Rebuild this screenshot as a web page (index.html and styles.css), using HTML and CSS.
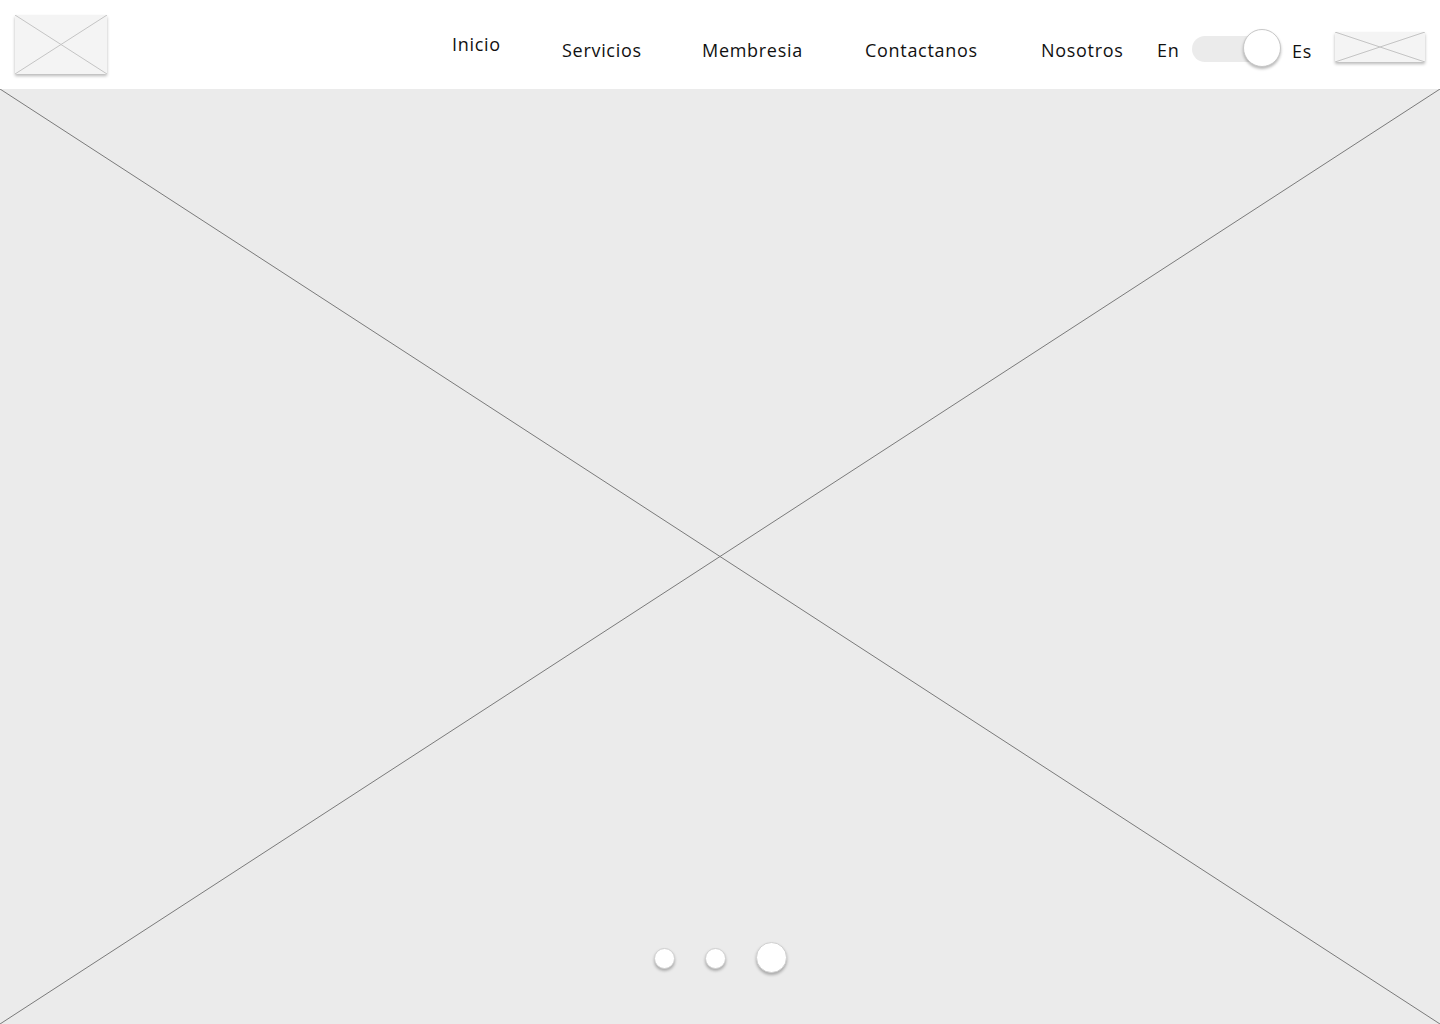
FILE: index.html
```html
<!DOCTYPE html>
<html lang="es">
<head>
<meta charset="utf-8">
<title>Inicio</title>
<link rel="stylesheet" href="styles.css">
</head>
<body>
<header class="header">
  <div class="logo ph">
    <svg class="ph-x" viewBox="0 0 100 100" preserveAspectRatio="none"><line x1="0" y1="0" x2="100" y2="100"/><line x1="100" y1="0" x2="0" y2="100"/></svg>
  </div>
  <nav class="nav">
    <a class="nav-link nav-inicio w-inicio" href="#">Inicio</a>
    <a class="nav-link w-servicios" href="#">Servicios</a>
    <a class="nav-link w-membresia" href="#">Membresia</a>
    <a class="nav-link w-contact" href="#">Contactanos</a>
    <a class="nav-link w-nosotros" href="#">Nosotros</a>
  </nav>
  <div class="lang">
    <span class="lang-label lang-en">En</span>
    <div class="toggle"><span class="track"></span><span class="knob"></span></div>
    <span class="lang-label lang-es">Es</span>
  </div>
  <div class="cta ph">
    <svg class="ph-x" viewBox="0 0 100 100" preserveAspectRatio="none"><line x1="0" y1="0" x2="100" y2="100"/><line x1="100" y1="0" x2="0" y2="100"/></svg>
  </div>
</header>
<main class="hero">
  <svg class="hero-x" viewBox="0 0 100 100" preserveAspectRatio="none"><line x1="0" y1="0" x2="100" y2="100"/><line x1="100" y1="0" x2="0" y2="100"/></svg>
  <div class="dots">
    <span class="dot"></span>
    <span class="dot"></span>
    <span class="dot dot-active"></span>
  </div>
</main>
</body>
</html>
```
FILE: styles.css
```css
* { box-sizing: border-box; }
html, body { margin: 0; padding: 0; }
body {
  width: 1440px;
  height: 1024px;
  overflow: hidden;
  background: #ffffff;
  font-family: "Open Sans", "DejaVu Sans", sans-serif;
  color: #111;
}
.header {
  height: 89px;
  display: flex;
  align-items: flex-start;
  background: #fff;
}
.ph {
  position: relative;
  background: #f4f4f4;
  box-shadow: 0 2px 3px rgba(0,0,0,0.28);
}
.ph-x {
  position: absolute;
  inset: 0;
  width: 100%;
  height: 100%;
}
.ph-x line {
  stroke: #c4c4c4;
  stroke-width: 1;
  vector-effect: non-scaling-stroke;
}
.logo {
  width: 92px;
  height: 59px;
  margin: 15px 0 0 15px;
}
.nav {
  display: flex;
  gap: 60px;
  margin: 40px 0 0 345px;
}
.nav-link {
  flex: none;
  font-size: 18px;
  letter-spacing: 0.7px;
  line-height: 20px;
  color: #111;
  text-decoration: none;
  white-space: nowrap;
}
.nav-inicio { margin-top: -6px; }
.w-inicio { width: 50px; }
.w-servicios { width: 80px; }
.w-membresia { width: 103px; }
.w-contact { width: 116px; }
.w-nosotros { width: 81px; }
.lang {
  display: flex;
  align-items: center;
  margin: 29px 0 0 35px;
  height: 39px;
}
.lang-label {
  font-size: 18px;
  letter-spacing: 0.7px;
  line-height: 20px;
  color: #111;
}
.lang-en { margin-top: 3px; width: 35px; }
.lang-es { margin-left: 11px; width: 43px; margin-top: 4px; }
.toggle {
  position: relative;
  width: 89px;
  height: 39px;
}
.track {
  position: absolute;
  left: 0;
  top: 7px;
  width: 70px;
  height: 26px;
  border-radius: 13px;
  background: #ebebeb;
}
.knob {
  position: absolute;
  left: 51px;
  top: 0;
  width: 38px;
  height: 38px;
  border-radius: 50%;
  background: #fff;
  border: 1px solid #c8c8c8;
  box-shadow: 0 2px 3px rgba(0,0,0,0.28);
}
.cta {
  width: 90px;
  height: 30px;
  margin-top: 32px;
}
.hero {
  position: relative;
  height: 935px;
  background: #ebebeb;
}
.hero-x {
  position: absolute;
  inset: 0;
  width: 100%;
  height: 100%;
}
.hero-x line {
  stroke: #7a7a7a;
  stroke-width: 1;
  vector-effect: non-scaling-stroke;
}
.dots {
  position: absolute;
  left: 654px;
  top: 854px;
  display: flex;
  align-items: center;
  gap: 30px;
}
.dot {
  width: 21px;
  height: 21px;
  border-radius: 50%;
  background: #fff;
  border: 1px solid #d0d0d0;
  box-shadow: 0 2px 3px rgba(0,0,0,0.28);
}
.dot-active {
  width: 31px;
  height: 31px;
  margin-top: -1px;
}
```
